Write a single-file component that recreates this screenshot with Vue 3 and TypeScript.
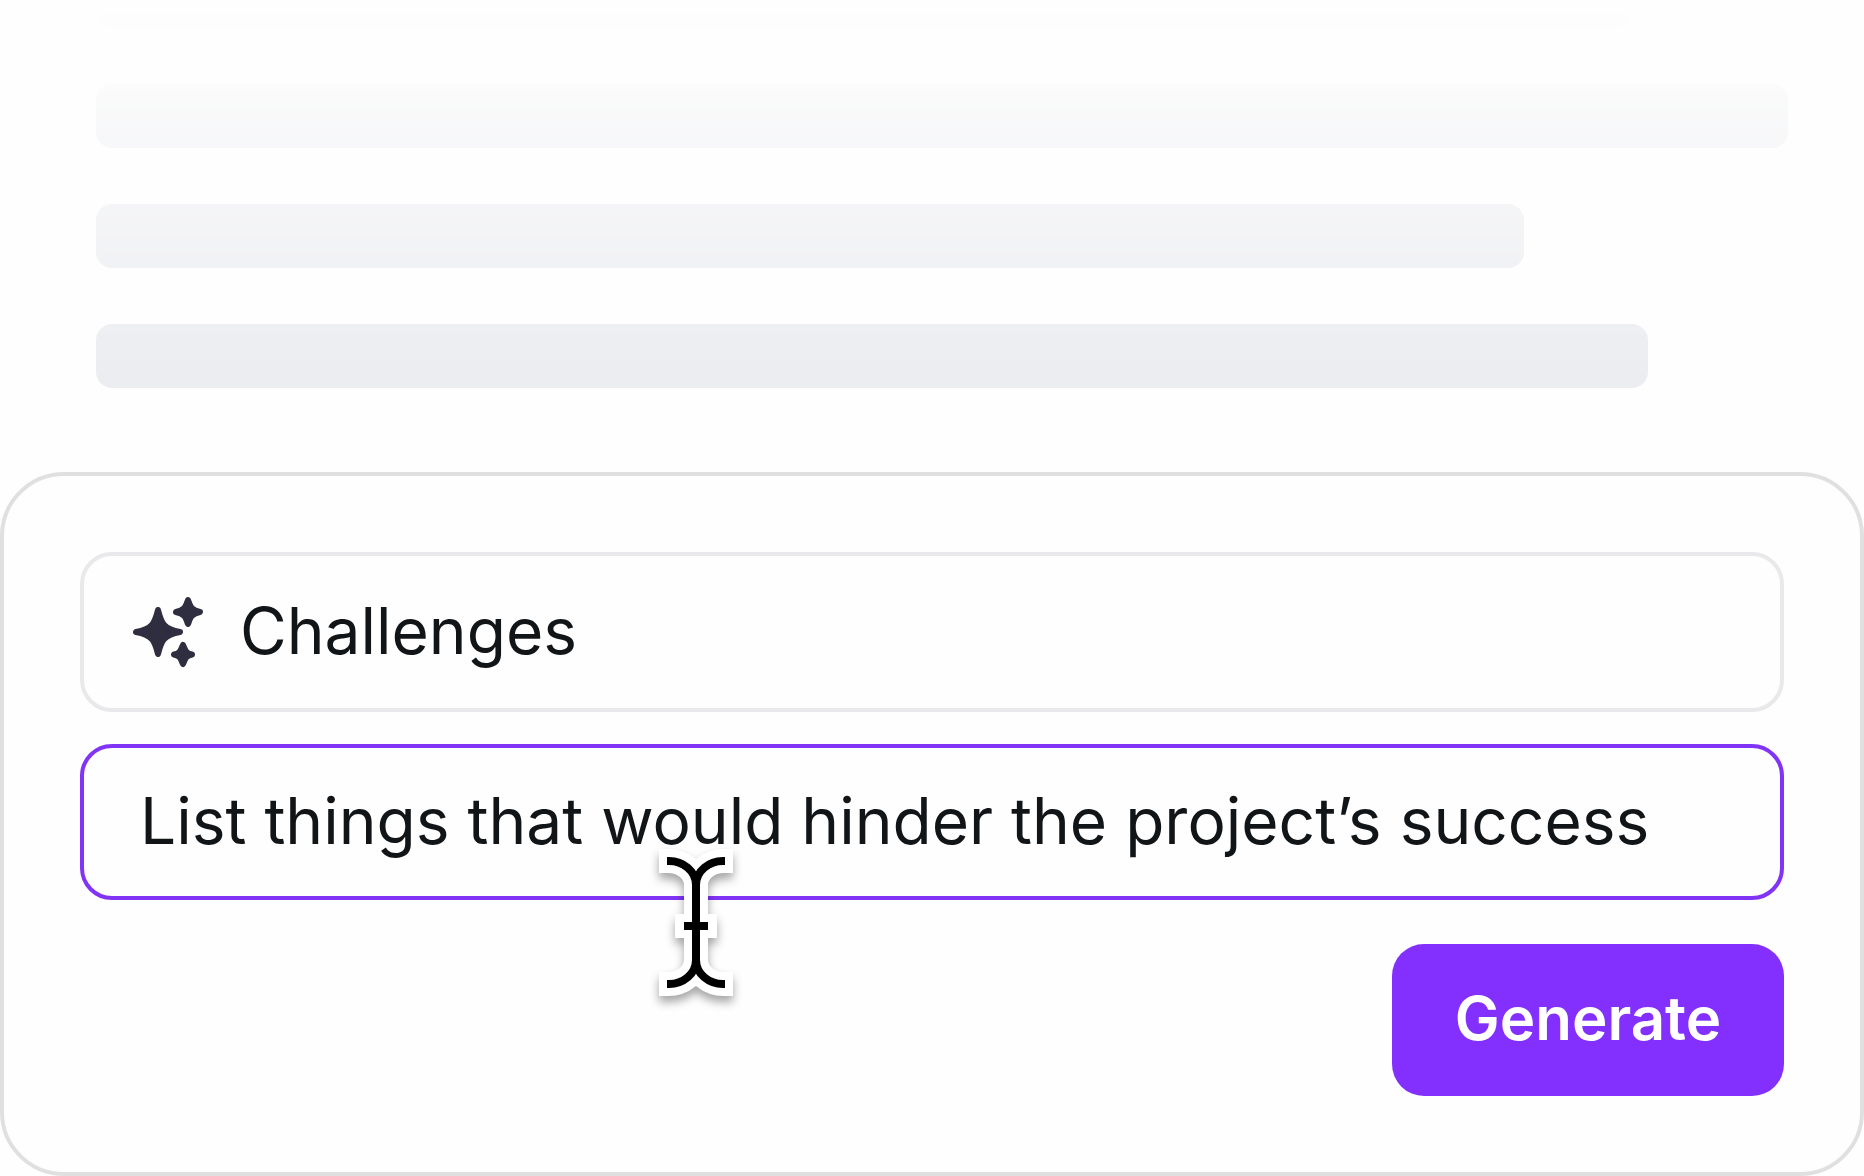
<script setup lang="ts">
import { ref } from 'vue'

const skeletonLines = [
  { id: 1, width: 90.8 },
  { id: 2, width: 100 },
  { id: 3, width: 84.4 },
  { id: 4, width: 91.7 },
]

const topic = ref<string>('Challenges')
const prompt = ref<string>('List things that would hinder the project’s success')
</script>

<template>
  <main class="page">
    <div class="skeleton" aria-hidden="true">
      <div
        v-for="line in skeletonLines"
        :key="line.id"
        class="skeleton-line"
        :style="{ width: line.width + '%' }"
      ></div>
    </div>

    <form class="card" @submit.prevent>
      <label class="field">
        <svg class="sparkles" viewBox="0 0 72 72" aria-hidden="true">
          <path d="M26 14C29 25 30 33 48 36C30 39 29 47 26 58C23 47 22 39 4 36C22 33 23 25 26 14Z" />
          <path d="M56 4C58 9 58 14 68 16C58 18 58 23 56 28C54 23 54 18 44 16C54 14 54 9 56 4Z" />
          <path d="M51 49C53 53 53 57 60 58.500C53 60 53 64 51 68C49 64 49 60 42 58.500C49 57 49 53 51 49Z" />
        </svg>
        <input v-model="topic" class="input" type="text" aria-label="Topic" />
      </label>

      <label class="field field-active">
        <input v-model="prompt" class="input" type="text" aria-label="Prompt" />
        <svg class="cursor" viewBox="0 0 92 168" aria-hidden="true">
          <g class="cursor-outline">
            <path d="M9 21H18C33 21 46 31 46 45C46 31 59 21 74 21H83" />
            <path d="M46 40V126" />
            <path d="M9 144H18C33 144 46 134 46 120C46 134 59 144 74 144H83" />
            <path d="M25 86H67" />
          </g>
          <g class="cursor-stroke">
            <path d="M17 21H19C33 21 46 31 46 45C46 31 59 21 73 21H75" />
            <path d="M46 40V126" />
            <path d="M17 144H19C33 144 46 134 46 120C46 134 59 144 73 144H75" />
            <path d="M34 86H58" />
          </g>
        </svg>
      </label>

      <button class="generate" type="submit">Generate</button>
    </form>
  </main>
</template>

<style>
body {
  margin: 0;
  background: #fefefe;
}
</style>

<style scoped>
.page {
  display: flex;
  flex-direction: column;
  font-family: Inter, 'Liberation Sans', sans-serif;
}

.skeleton {
  display: flex;
  flex-direction: column;
  gap: 56px;
  padding: 0 76px 84px 96px;
  mask-image: linear-gradient(to bottom, transparent 0, rgba(0, 0, 0, 0.15) 80px, rgba(0, 0, 0, 0.8) 300px, #000 400px);
}

.skeleton-line {
  height: 64px;
  border-radius: 16px;
  background: #ebecf0;
}

.skeleton-line:first-child {
  height: 28px;
  border-radius: 0 0 16px 16px;
}

.card {
  box-sizing: border-box;
  display: flex;
  flex-direction: column;
  padding: 76px;
  border: 4px solid #e0e0e1;
  border-radius: 64px;
  background: #fefefe;
}

.field {
  box-sizing: border-box;
  position: relative;
  display: flex;
  align-items: center;
  gap: 36px;
  height: 160px;
  padding: 0 48px;
  border: 4px solid #e9e9eb;
  border-radius: 32px;
}

.field-active {
  height: 156px;
  margin-top: 32px;
  padding: 0 56px;
  border-color: #8133f6;
}

.sparkles {
  flex: none;
  width: 72px;
  height: 72px;
  fill: #2f2e41;
  stroke: #2f2e41;
  stroke-width: 6;
  stroke-linejoin: round;
}

.input {
  flex: 1;
  min-width: 0;
  padding: 0 0 2px;
  border: 0;
  outline: 0;
  background: transparent;
  color: #121517;
  font-family: inherit;
  font-size: 64px;
  line-height: 80px;
}

.cursor {
  position: absolute;
  top: 92px;
  left: 566px;
  width: 92px;
  height: 168px;
  overflow: visible;
  fill: none;
  pointer-events: none;
}

.cursor-outline {
  stroke: #fff;
  stroke-width: 24;
  filter: drop-shadow(0 6px 5px rgba(0, 0, 0, 0.35));
}

.cursor-stroke {
  stroke: #000;
  stroke-width: 8;
}

.generate {
  align-self: flex-end;
  min-width: 392px;
  height: 152px;
  margin-top: 44px;
  padding: 0 60px 4px;
  border: 0;
  border-radius: 32px;
  background: #8330ff;
  color: #fff;
  font-family: inherit;
  font-size: 60px;
  font-weight: 600;
  line-height: 72px;
}
</style>
